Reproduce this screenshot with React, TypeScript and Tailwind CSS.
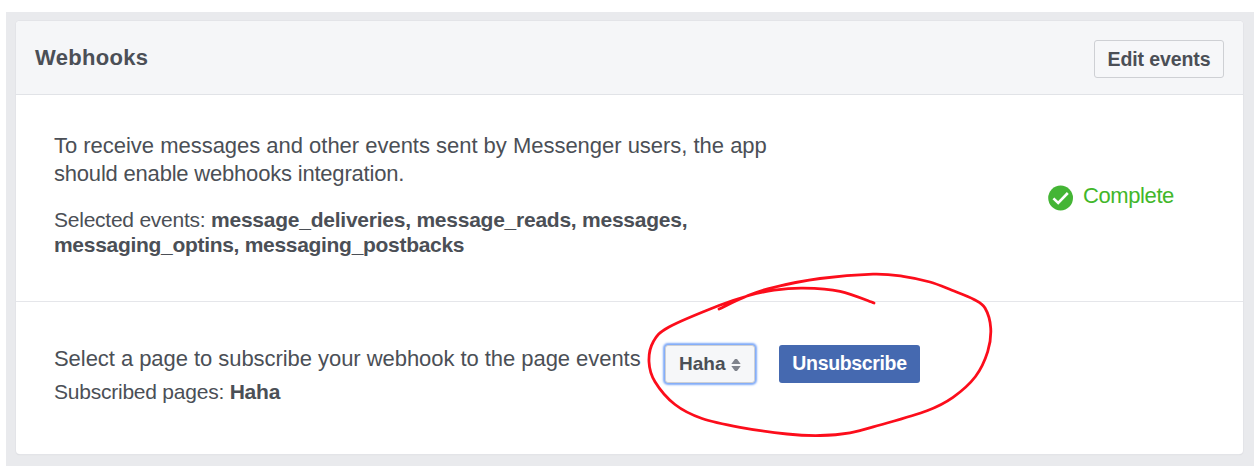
type Point = [number, number];

const stroke: Point[] = [
  [719, 309], [747, 296], [773, 287.5], [820, 278.5], [873, 274.2], [903, 276.3], [930, 282],
  [952, 290.3], [974, 299.5], [985, 308], [990.7, 328], [987.7, 351.7], [975.5, 376.5], [953, 397.3],
  [927, 410.7], [880, 425], [850, 432.8], [820, 435.5], [787, 434], [740, 427.3], [702, 418.5],
  [675, 404.5], [655, 381.7], [649, 361.7], [653.3, 341.7], [669, 327], [719, 305.5], [749, 295.5],
  [774, 290.2], [803, 288.2], [840, 291.3], [874, 303],
];

// Catmull-Rom spline through the points, written as cubic segments.
function smoothPath(points: Point[]) {
  let d = `M${points[0][0]} ${points[0][1]}`;
  for (let i = 0; i < points.length - 1; i++) {
    const a = points[Math.max(i - 1, 0)];
    const b = points[i];
    const c = points[i + 1];
    const e = points[Math.min(i + 2, points.length - 1)];
    d += `C${b[0] + (c[0] - a[0]) / 6} ${b[1] + (c[1] - a[1]) / 6} ${c[0] - (e[0] - b[0]) / 6} ${c[1] - (e[1] - b[1]) / 6} ${c[0]} ${c[1]}`;
  }
  return d;
}

function CheckBadge() {
  return (
    <svg viewBox="0 0 26 26" className="mt-[3px] h-[26px] w-[26px] shrink-0">
      <circle cx="12.6" cy="13" r="12.4" fill="#44b535" />
      <path d="M5.4 13.4l4.8 4.6 9.6-10" fill="none" stroke="#fff" strokeWidth="2.6" />
    </svg>
  );
}

function Sorter() {
  return (
    <svg viewBox="0 0 10 14" className="mt-px h-[14px] w-[10px]" fill="#7f838c">
      <path d="M0.3 6L4 1.1h2L9.7 6zM0.3 8L4 12.9h2L9.7 8z" />
    </svg>
  );
}

export default function App() {
  return (
    <div className="relative h-[472px] w-[1260px] overflow-hidden bg-white pt-3 pl-1.5 font-['Liberation_Sans',Arial,sans-serif] text-[#4b4f56]">
      <div className="h-[454px] w-[1248px] bg-[#e9eaed] pt-[9px] pl-2.5">
        <section className="flex h-[433px] w-[1227px] flex-col rounded-[4px] bg-white shadow-[0_0_0_1px_#e3e4e8,0_1px_1px_#d0d2d6]">
          <header className="flex h-[74px] shrink-0 items-center justify-between rounded-t-[4px] border-b border-[#e1e3e7] bg-[#f5f6f8] pr-[19px] pl-[19px]">
            <h2 className="text-[22px] leading-6 font-bold tracking-[0.3px] whitespace-nowrap">Webhooks</h2>
            <button className="mt-0.5 h-[38px] w-[130px] rounded-[3px] border border-[#ced0d4] bg-[#f6f7f9] pt-0.5 text-[19.5px] font-bold tracking-[-0.1px] whitespace-nowrap">
              Edit events
            </button>
          </header>
          <div className="flex h-[207px] shrink-0 justify-between border-b border-[#e5e6ea] pr-[69px] pl-[38px]">
            <div className="pt-[37px] whitespace-nowrap">
              <p className="text-[22px] leading-[28px]">
                <span className="tracking-[-0.02px]">To receive messages and other events sent by Messenger users, the app</span>
                <br />
                <span className="tracking-[-0.2px]">should enable webhooks integration.</span>
              </p>
              <p className="mt-[19px] text-[21px] leading-[25px] tracking-[-0.24px]">
                Selected events: <b>message_deliveries, message_reads, messages,</b>
                <br />
                <b className="tracking-[-0.3px]">messaging_optins, messaging_postbacks</b>
              </p>
            </div>
            <div className="mt-[87px] flex h-8 w-[126px] gap-[9px] text-[22px] leading-[28px] tracking-[-0.4px] whitespace-nowrap text-[#42b72a]">
              <CheckBadge />
              <span>Complete</span>
            </div>
          </div>
          <div className="flex h-[152px] pl-[38px]">
            <div className="w-[611px] pt-[43px] whitespace-nowrap">
              <p className="text-[22px] leading-[28px] tracking-[-0.05px]">
                Select a page to subscribe your webhook to the page events
              </p>
              <p className="mt-[6px] text-[21px] leading-[25px] tracking-[-0.23px]">
                Subscribed pages: <b>Haha</b>
              </p>
            </div>
            <button className="mt-[43px] flex h-[38px] w-[90px] items-center gap-[6px] rounded-[3px] border border-[#ced0d4] bg-[#f6f7f9] pl-[13px] text-[19px] font-bold shadow-[0_0_2px_2px_#7faaf8]">
              Haha
              <Sorter />
            </button>
            <button className="mt-[43px] ml-[24px] h-[38px] w-[141px] rounded-[3px] bg-[#4569b0] text-[19.5px] font-bold tracking-[-0.35px] whitespace-nowrap text-white">
              Unsubscribe
            </button>
          </div>
        </section>
      </div>
      <svg viewBox="0 0 1260 472" className="pointer-events-none absolute inset-0 h-[472px] w-[1260px]" fill="none">
        <path d={smoothPath(stroke)} stroke="#fc0d1b" strokeWidth="2.8" strokeLinecap="round" strokeLinejoin="round" />
      </svg>
    </div>
  );
}
